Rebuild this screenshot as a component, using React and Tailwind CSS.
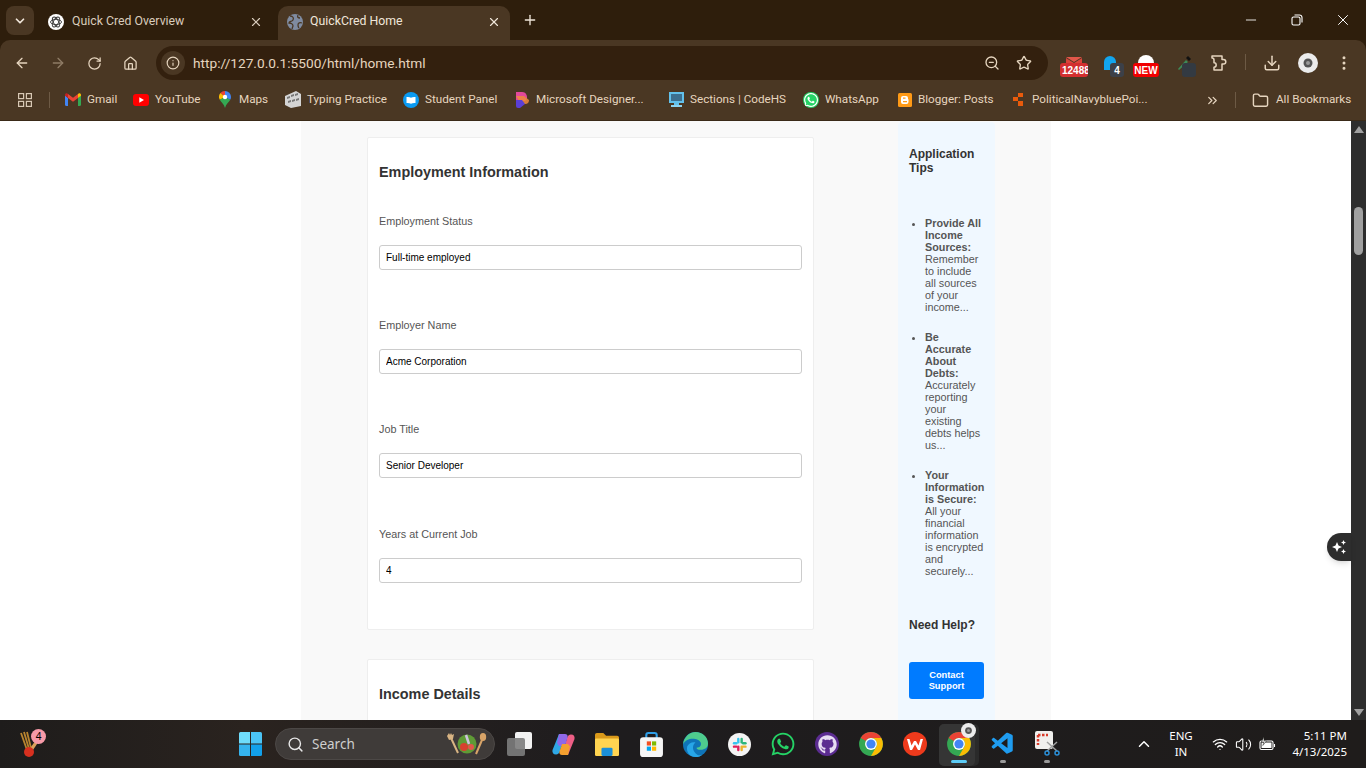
import React from "react";
import { FaWhatsapp, FaGithub } from "react-icons/fa";
import { VscVscode } from "react-icons/vsc";
import {
  ArrowLeft,
  ArrowRight,
  RotateCw,
  Home,
  Info,
  ZoomOut,
  Star,
  Download,
  EllipsisVertical,
  ChevronDown,
  ChevronUp,
  ChevronsRight,
  Folder,
  X,
  Plus,
  Minus,
  Search,
  Wifi,
  Volume2,
} from "lucide-react";

function ChromeLogo({ size = 32 }) {
  return (
    <svg width={size} height={size} viewBox="0 0 48 48">
      <circle cx="24" cy="24" r="22" fill="#34a853" />
      <path d="M24 2A22 22 0 0 1 43 13H24A11 11 0 0 0 14.500 18.500L5 13A22 22 0 0 1 24 2Z" fill="#ea4335" />
      <path d="M43 13A22 22 0 0 1 24 46L33.500 29.500A11 11 0 0 0 24 13Z" fill="#fbbc04" />
      <circle cx="24" cy="24" r="11" fill="#fff" />
      <circle cx="24" cy="24" r="8.500" fill="#4285f4" />
    </svg>
  );
}

function Avatar({ size = 20 }) {
  return (
    <svg width={size} height={size} viewBox="0 0 20 20">
      <circle cx="10" cy="10" r="10" fill="#ececec" />
      <circle cx="10" cy="10" r="4.500" fill="#555" />
      <circle cx="10" cy="10" r="2" fill="#999" />
    </svg>
  );
}

function KnotFavicon() {
  return (
    <svg width="16" height="16" viewBox="0 0 16 16" fill="none" stroke="#3c3c3c" strokeWidth="0.900">
      <circle cx="8" cy="8" r="8" fill="#fff" stroke="none" />
      <ellipse cx="8" cy="8" rx="5.500" ry="2.600" />
      <ellipse cx="8" cy="8" rx="5.500" ry="2.600" transform="rotate(60 8 8)" />
      <ellipse cx="8" cy="8" rx="5.500" ry="2.600" transform="rotate(120 8 8)" />
    </svg>
  );
}

function GmailIcon() {
  return (
    <svg width="16" height="13" viewBox="0 0 16 13">
      <path d="M0 2v9.500A1.500 1.500 0 0 0 1.500 13H3V5z" fill="#4285f4" />
      <path d="M16 2v9.500a1.500 1.500 0 0 1-1.500 1.500H13V5z" fill="#34a853" />
      <path d="M3 5 8 8.800 13 5V1l-5 3.800L3 1z" fill="#ea4335" />
      <path d="M0 2c0-1.600 2-2.300 3-1V5L0 2.800z" fill="#c5221f" />
      <path d="M16 2c0-1.600-2-2.300-3-1V5l3-2.200z" fill="#fbbc04" />
    </svg>
  );
}

function YoutubeIcon() {
  return (
    <svg width="16" height="12" viewBox="0 0 16 12">
      <rect width="16" height="12" rx="3" fill="#ff0000" />
      <path d="M6.300 3.200v5.600L11 6z" fill="#fff" />
    </svg>
  );
}

function MapsIcon() {
  return (
    <svg width="12" height="17" viewBox="0 0 12 17">
      <path d="M6 0a6 6 0 0 1 6 6c0 1-.3 1.900-.8 2.800L6 6z" fill="#4285f4" />
      <path d="M6 0a6 6 0 0 0-4.600 2.100L6 6z" fill="#ea4335" />
      <path d="M1.400 2.100A6 6 0 0 0 .800 8.800L6 6z" fill="#fbbc04" />
      <path d="M.800 8.800C2 11 5 13 6 17c1-4 4-6 5.200-8.200L6 6z" fill="#34a853" />
      <circle cx="6" cy="6" r="2.200" fill="#fff" />
    </svg>
  );
}

function TypingIcon() {
  return (
    <svg width="16" height="17" viewBox="0 0 16 17">
      <path d="M0 5 11 0l5 3v12l-10 2-6-3z" fill="#d4d4d4" />
      <path d="M2 6l3-1v2l-3 1zm4-2 3-1v2L6 6zm4-1 3-1v2l-3 1zM3 10l3-1v2l-3 1zm4-1 3-1v2l-3 1zm4-1 3-1v2l-3 1z" fill="#777" />
    </svg>
  );
}

function StudentIcon() {
  return (
    <svg width="16" height="16" viewBox="0 0 16 16">
      <circle cx="8" cy="8" r="8" fill="#0a9af2" />
      <path d="M3.500 5c1.800-.3 3.300 0 4.500.8v6c-1.200-.8-2.700-1-4.500-.8zM12.500 5c-1.800-.3-3.300 0-4.500.8v6c1.200-.8 2.700-1 4.500-.8z" fill="#fff" />
    </svg>
  );
}

function DesignerIcon() {
  return (
    <svg width="15" height="16" viewBox="0 0 15 16">
      <path d="M1 0h6a5 5 0 0 1 3 9H1z" fill="#e3489b" />
      <path d="M1 4h8l5 4a4 4 0 0 1-4 4H6z" fill="#f08a3c" opacity=".85" />
      <path d="M1 8h6l3 4-5 4H3a2 2 0 0 1-2-2z" fill="#5a3fd6" />
    </svg>
  );
}

function SectionsIcon() {
  return (
    <svg width="15" height="15" viewBox="0 0 15 15">
      <rect width="15" height="11" fill="#62c0ea" />
      <rect x="2" y="2" width="11" height="7" fill="#3c6f8f" />
      <rect x="5" y="11" width="5" height="2" fill="#62c0ea" />
      <rect x="2" y="13" width="11" height="2" fill="#8bd4f2" />
    </svg>
  );
}

function BloggerIcon() {
  return (
    <svg width="14" height="14" viewBox="0 0 14 14">
      <rect width="14" height="14" rx="1.500" fill="#ff9a16" />
      <path d="M5 3h3a2 2 0 0 1 2 2v1l.500.500V9a2 2 0 0 1-2 2H5a2 2 0 0 1-2-2V5a2 2 0 0 1 2-2z" fill="#fff" />
      <path d="M5 5.200h2.500M5 8.600h4" stroke="#ff9a16" strokeWidth="1.200" />
    </svg>
  );
}

function PoiIcon() {
  return (
    <svg width="13" height="13" viewBox="0 0 13 13">
      <path d="M0 4h5V0h5v4H5v4H0zM5 8h5v5H5z" fill="#ea5b0c" />
    </svg>
  );
}

function PuzzleIcon() {
  return (
    <svg width="17" height="16" viewBox="0 0 17 16" fill="none" stroke="#e6d5bf" strokeWidth="1.500" strokeLinejoin="round">
      <path d="M1 1h10v3.500h1.500a2.300 2.300 0 0 1 0 4.600H11V15H3v-2.800a2.200 2.200 0 0 0 0-4.400V5A2 2 0 0 0 1 3z" />
    </svg>
  );
}

function WindowsLogo() {
  return (
    <svg width="23" height="24" viewBox="0 0 23 24">
      <path d="M0 1.500A1.500 1.500 0 0 1 1.500 0H11v11.500H0z" fill="#6fdcfb" />
      <path d="M12 0h9.500A1.500 1.500 0 0 1 23 1.500v10H12z" fill="#4bc4f5" />
      <path d="M0 12.500h11V24H1.500A1.500 1.500 0 0 1 0 22.500z" fill="#35b3ee" />
      <path d="M12 12.500h11v10a1.500 1.500 0 0 1-1.500 1.500H12z" fill="#12a0ea" />
    </svg>
  );
}

function CricketIcon() {
  return (
    <svg width="24" height="28" viewBox="0 0 24 28">
      <path d="M3 3l6 17M6 2l5 17M9 2l4 16" stroke="#b8842f" strokeWidth="1.800" />
      <path d="M21 11l-8 12-3-2 8-11z" fill="#d9a05b" />
      <circle cx="11" cy="22" r="5" fill="#d7301f" />
    </svg>
  );
}

function SaladIcon() {
  return (
    <svg width="42" height="24" viewBox="0 0 42 24">
      <path d="M5 6l7 15" stroke="#d8b483" strokeWidth="2" />
      <path d="M1 4l2-3 1 2 1-2 1 2 2-1-1 5-4 1z" fill="#d8b483" />
      <ellipse cx="37" cy="5" rx="3.200" ry="4" fill="#d8a468" />
      <path d="M36 8l-6 14" stroke="#d8a468" strokeWidth="2" />
      <circle cx="21" cy="12" r="9.500" fill="#5f9a36" />
      <circle cx="18" cy="15" r="4" fill="#d7412f" />
      <circle cx="25" cy="15" r="3" fill="#e2574a" />
      <path d="M20 3l3 9" stroke="#cfc3df" strokeWidth="2.500" />
    </svg>
  );
}

function TaskViewIcon() {
  return (
    <svg width="25" height="24" viewBox="0 0 25 24">
      <rect x="8" y="0" width="17" height="17" rx="2" fill="#f2f2f2" />
      <rect x="0" y="6" width="18" height="18" rx="2" fill="#7c7c7c" fillOpacity=".9" />
    </svg>
  );
}

function CopilotIcon() {
  return (
    <svg width="23" height="23" viewBox="0 0 23 23">
      <path d="M7 1h6L8 18c-.600 2-2 3.500-4 3.500-2.800 0-4-2-3.500-4.500z" fill="#2fa8e6" />
      <path d="M16 22h-6l5-17c.600-2 2-3.500 4-3.500 2.800 0 4 2 3.500 4.500z" fill="#ee5f86" />
      <path d="M7 1h6c2 0 3 1.500 2.500 3.500L13 13H7l-2-3z" fill="#8f68e8" />
      <path d="M16 22h-6c-2 0-3-1.500-2.500-3.500L10 11h6l2 2.500z" fill="#f5a02f" />
    </svg>
  );
}

function FilesIcon() {
  return (
    <svg width="24" height="24" viewBox="0 0 26 26">
      <path d="M0 3a2 2 0 0 1 2-2h7l3 3h12a2 2 0 0 1 2 2v18a2 2 0 0 1-2 2H2a2 2 0 0 1-2-2z" fill="#d9991a" />
      <rect y="7" width="26" height="19" rx="1.500" fill="#ffd451" />
      <rect x="7" y="17" width="12" height="9" rx="1.500" fill="#1a8fd8" />
    </svg>
  );
}

function StoreIcon() {
  return (
    <svg width="23" height="25" viewBox="0 0 22 24">
      <path d="M6 6V3a2 2 0 0 1 2-2h6a2 2 0 0 1 2 2v3" fill="none" stroke="#2f9fe8" strokeWidth="2" />
      <rect y="5" width="22" height="19" rx="3" fill="#f5f5f5" />
      <rect x="6.500" y="9" width="4" height="4" fill="#f25022" />
      <rect x="11.500" y="9" width="4" height="4" fill="#7fba00" />
      <rect x="6.500" y="14" width="4" height="4" fill="#00a4ef" />
      <rect x="11.500" y="14" width="4" height="4" fill="#ffb900" />
    </svg>
  );
}

function EdgeIcon() {
  return (
    <svg width="25" height="25" viewBox="0 0 24 24">
      <circle cx="12" cy="12" r="12" fill="#0f74b8" />
      <path d="M0 12C1 4 7 0 12 0c7 0 12 5 12 11 0 4-3 6-7 6-3 0-4-1-4-2 3 0 5-2 4-5-2-4-13-6-17 2z" fill="#4ecb8d" />
      <path d="M12 24C6 24 3 19 4 14c1-3 5-5 8-4-3 2-4 8 2 12 2 1 4 0 5-.500-2 1.500-4 2.500-7 2.500z" fill="#27a6e8" />
    </svg>
  );
}

function SlackIcon() {
  return (
    <svg width="23" height="23" viewBox="0 0 24 24">
      <circle cx="12" cy="12" r="12" fill="#f4f4f4" />
      <rect x="9.500" y="5" width="2.500" height="6" rx="1.250" fill="#36c5f0" />
      <rect x="5" y="9.500" width="5" height="2.500" rx="1.250" fill="#36c5f0" />
      <rect x="13" y="5" width="2.500" height="6" rx="1.250" fill="#2eb67d" />
      <rect x="14.500" y="9.500" width="5" height="2.500" rx="1.250" fill="#2eb67d" />
      <rect x="13" y="13" width="2.500" height="6" rx="1.250" fill="#ecb22e" />
      <rect x="14.500" y="13" width="5" height="2.500" rx="1.250" fill="#ecb22e" />
      <rect x="9.500" y="13" width="2.500" height="6" rx="1.250" fill="#e01e5a" />
      <rect x="5" y="13" width="5" height="2.500" rx="1.250" fill="#e01e5a" />
    </svg>
  );
}

function WpsIcon() {
  return (
    <svg width="24" height="24" viewBox="0 0 24 24">
      <circle cx="12" cy="12" r="12" fill="#ee3a1c" />
      <path d="M4 7h2.500l2 6.500L11 9h2l2.500 4.500 2-6.500H20l-3 11h-2l-3-5.500L9 18H7z" fill="#fff" />
    </svg>
  );
}

function SnipIcon() {
  return (
    <svg width="26" height="26" viewBox="0 0 26 26">
      <rect x="1" y="0" width="18" height="18" rx="2" fill="#f0efed" />
      <path d="M4 4h10M4 4v10" stroke="#d83b2a" strokeWidth="2.500" strokeDasharray="2.500 1.500" />
      <path d="M13 11l10 9M23 11l-10 9" stroke="#a0a0a0" strokeWidth="1.500" />
      <circle cx="13" cy="22" r="2" fill="none" stroke="#2a8fd8" strokeWidth="1.500" />
      <circle cx="23" cy="22" r="2" fill="none" stroke="#2a8fd8" strokeWidth="1.500" />
    </svg>
  );
}

function BatteryIcon() {
  return (
    <svg width="17" height="14" viewBox="0 0 17 14" fill="none" stroke="#fff" strokeWidth="1.100">
      <rect x="1" y="4" width="13" height="8.500" rx="1.500" />
      <path d="M15.500 7v3" />
      <path d="M2.500 5.500h10v5.500h-10z" fill="#fff" stroke="none" />
      <path d="M5 0 2.500 5h2.500L3.800 8.500 7.500 4H5z" fill="#fff" stroke="#1f1c1b" strokeWidth="0.500" />
    </svg>
  );
}

function Sparkles() {
  return (
    <svg width="16" height="16" viewBox="0 0 16 16" fill="#fff">
      <path d="M6 3l1.500 3.500L11 8 7.500 9.500 6 13 4.500 9.500 1 8l3.500-1.500z" />
      <path d="M12.500 1l.8 1.700L15 3.500l-1.700.8-.8 1.700-.8-1.700L10 3.500l1.700-.8z" />
      <path d="M12.500 10l.8 1.700 1.700.8-1.700.8-.8 1.700-.8-1.700-1.700-.8 1.700-.8z" />
    </svg>
  );
}

const bookmarks = [
  { label: "Gmail", icon: <GmailIcon />, width: "w-[68px] gap-[6px]" },
  { label: "YouTube", icon: <YoutubeIcon />, width: "w-[86px] gap-[6px]" },
  { label: "Maps", icon: <MapsIcon />, width: "w-[66px] gap-[8px]" },
  { label: "Typing Practice", icon: <TypingIcon />, width: "w-[118px] gap-[6px]" },
  { label: "Student Panel", icon: <StudentIcon />, width: "w-[112px] gap-[6px]" },
  { label: "Microsoft Designer...", icon: <DesignerIcon />, width: "w-[154px] gap-[6px]" },
  { label: "Sections | CodeHS", icon: <SectionsIcon />, width: "w-[134px] gap-[6px]" },
  { label: "WhatsApp", icon: <FaWhatsapp size={16} color="#fff" className="rounded-full bg-[#25d366]" />, width: "w-[95px] gap-[6px]" },
  { label: "Blogger: Posts", icon: <BloggerIcon />, width: "w-[115px] gap-[6px]" },
  { label: "PoliticalNavybluePoi...", icon: <PoiIcon />, width: "w-[186px] gap-[6px]" },
];

const fields = [
  { label: "Employment Status", value: "Full-time employed" },
  { label: "Employer Name", value: "Acme Corporation" },
  { label: "Job Title", value: "Senior Developer" },
  { label: "Years at Current Job", value: "4" },
];

const tips = [
  {
    title: "Provide All Income Sources:",
    text: "Remember to include all sources of your income...",
  },
  {
    title: "Be Accurate About Debts:",
    text: "Accurately reporting your existing debts helps us...",
  },
  {
    title: "Your Information is Secure:",
    text: "All your financial information is encrypted and securely...",
  },
];

function ExtBadge({ children, className }) {
  return (
    <span
      className={
        "absolute bottom-0 h-[14px] rounded-[3px] overflow-hidden flex items-center font-['Liberation_Sans',sans-serif] font-bold text-[10px] text-white " +
        className
      }
    >
      {children}
    </span>
  );
}

function Toolbar() {
  return (
    <div className="flex items-end h-[40px] bg-[#4a3723] rounded-t-[10px] text-[#e6d5bf]">
      <div className="flex items-center h-[34px] pl-[14px]">
        <ArrowLeft size={16} strokeWidth={2} />
        <ArrowRight size={16} strokeWidth={2} className="ml-[20px] text-[#8f7c66]" />
        <RotateCw size={15} strokeWidth={2} className="ml-[21px]" />
        <Home size={15} strokeWidth={2} className="ml-[21px]" />
      </div>
      <div className="ml-[18px] flex items-center w-[892px] h-[34px] rounded-full bg-[#33200e]">
        <div className="ml-[5px] flex items-center justify-center w-[24px] h-[24px] rounded-full bg-[#4a3723]">
          <Info size={14} />
        </div>
        <span className="ml-[8px] flex-1 text-[13.700px]">http://127.0.0.1:5500/html/home.html</span>
        <ZoomOut size={16} />
        <Star size={16} className="ml-[16px] mr-[16px]" />
      </div>
      <div className="flex items-center h-[40px] relative flex-1">
        <div className="absolute left-[12px] top-[14px] w-[28px] h-[23px]">
          <svg width="16" height="6" viewBox="0 0 16 6" className="ml-[6px] mt-[3px]">
            <path d="M0 0h16L8 5z" fill="#e2574a" />
            <path d="M0 1l8 5 8-5v5H0z" fill="#d9453b" />
          </svg>
          <ExtBadge className="left-0 w-[28px] pl-[2px] bg-[#d32f2f]">12488</ExtBadge>
        </div>
        <div className="absolute left-[56px] top-[14px] w-[20px] h-[23px]">
          <svg width="12" height="14" viewBox="0 0 12 14" className="mt-[2px]">
            <path d="M0 6a6 6 0 0 1 12 0v8H0z" fill="#12a5ee" />
          </svg>
          <ExtBadge className="left-[6px] w-[14px] justify-center bg-[#3c4048]">4</ExtBadge>
        </div>
        <div className="absolute left-[85px] top-[14px] w-[26px] h-[23px]">
          <svg width="16" height="8" viewBox="0 0 16 8" className="ml-[5px] mt-[1px]">
            <path d="M0 8a8 8 0 0 1 16 0z" fill="#fff" />
          </svg>
          <ExtBadge className="left-0 w-[26px] justify-center bg-[#f00000]">NEW</ExtBadge>
        </div>
        <div className="absolute left-[129px] top-[14px] w-[20px] h-[23px]">
          <svg width="14" height="14" viewBox="0 0 14 14" className="mt-[2px]">
            <path d="M1 13l8-9 2 2-9 8z" fill="#3e8a58" />
            <path d="M9 2l2-2 3 3-2 2z" fill="#111" />
          </svg>
          <ExtBadge className="left-[5px] w-[14px] bg-[#333a42]">{""}</ExtBadge>
        </div>
        <div className="absolute left-[163px] top-[15px]">
          <PuzzleIcon />
        </div>
        <div className="absolute left-[197px] top-[14px] w-px h-[16px] bg-[#6d5a45]" />
        <Download size={18} className="absolute left-[215px] top-[14px]" />
        <div className="absolute left-[250px] top-[13px]">
          <Avatar />
        </div>
        <EllipsisVertical size={18} className="absolute left-[287px] top-[14px]" />
      </div>
    </div>
  );
}

function BookmarksBar() {
  return (
    <div className="flex items-center h-[40px] pl-[18px] bg-[#4a3723] text-[#e6d5bf] text-[11.700px]">
      <svg width="14" height="14" viewBox="0 0 14 14" fill="none" stroke="#d8c8b4" strokeWidth="1.200">
        <rect x="0.600" y="0.600" width="5" height="5" />
        <rect x="8.400" y="0.600" width="5" height="5" />
        <rect x="0.600" y="8.400" width="5" height="5" />
        <rect x="8.400" y="8.400" width="5" height="5" />
      </svg>
      <div className="ml-[17px] mr-[15px] w-px h-[16px] bg-[#6d5a45]" />
      {bookmarks.map((b) => (
        <div key={b.label} className={"flex items-center " + b.width}>
          {b.icon}
          <span>{b.label}</span>
        </div>
      ))}
      <ChevronsRight size={15} className="ml-[6px]" />
      <div className="ml-[15px] w-px h-[16px] bg-[#6d5a45]" />
      <Folder size={17} className="ml-[16px]" />
      <span className="ml-[7px]">All Bookmarks</span>
    </div>
  );
}

function Chrome() {
  return (
    <header className="shrink-0 h-[121px] bg-[#2e1e0c] font-['Roboto',sans-serif] border-b border-[#3a2a18]">
      <div className="flex items-start h-[40px]">
        <div className="ml-[6px] mt-[6px] flex items-center justify-center w-[28px] h-[29px] rounded-[8px] bg-[#4a3723] text-[#f0e6da]">
          <ChevronDown size={14} strokeWidth={3} />
        </div>
        <div className="ml-[12px] flex items-center w-[232px] h-[34px] mt-[6px] pl-[2px] pr-[15px] pb-[3px] text-[#d9ccbc]">
          <KnotFavicon />
          <span className="ml-[8px] flex-1 text-[12.300px]">Quick Cred Overview</span>
          <X size={14} strokeWidth={2} />
        </div>
        <div className="flex items-center w-[232px] h-[34px] mt-[6px] pl-[9px] pr-[9px] pb-[3px] rounded-t-[10px] bg-[#4a3723] text-[#f0e6da]">
          <svg width="16" height="16" viewBox="0 0 16 16">
            <circle cx="8" cy="8" r="8" fill="#7f8ba0" />
            <path d="M3 2c3 0 4 2 3 4S2 7 2 9c2 0 4 1 4 3l-1 3M11 1c-1 2 0 3 2 3M15 9c-2-1-4 0-4 2s1 3 1 3" stroke="#4a3723" strokeWidth="1.300" fill="none" />
          </svg>
          <span className="ml-[7px] flex-1 text-[12.300px]">QuickCred Home</span>
          <X size={14} strokeWidth={2} />
        </div>
        <Plus size={16} strokeWidth={2} className="ml-[12px] mt-[12px] text-[#f0e6da]" />
        <div className="ml-auto flex items-center mt-[11px] text-white">
          <Minus size={16} strokeWidth={1.300} />
          <svg width="12" height="12" viewBox="0 0 12 12" fill="none" stroke="#fff" strokeWidth="1.100" className="ml-[32px]">
            <rect x="1" y="3" width="8" height="8" rx="1.500" />
            <path d="M3.500 1h5A2.500 2.500 0 0 1 11 3.500v5" />
          </svg>
          <X size={18} strokeWidth={1.300} className="ml-[31px] mr-[14px]" />
        </div>
      </div>
      <Toolbar />
      <BookmarksBar />
    </header>
  );
}

function EmploymentCard() {
  return (
    <section className="bg-white border border-[#eeeeee] rounded-[2px] px-[11px] pt-[26px] pb-[46.500px]">
      <h2 className="text-[14.400px] leading-[16px] font-bold text-[#333333]">Employment Information</h2>
      <div className="mt-[34px]">
        {fields.map((f, i) => (
          <div key={f.label} className={i < 3 ? "mb-[48.200px]" : ""}>
            <label className="block text-[10.800px] leading-[14px] text-[#555555]">{f.label}</label>
            <input
              readOnly
              value={f.value}
              className="block mt-[17px] w-[423px] h-[25px] px-[6px] text-[10px] text-black bg-white border border-[#cccccc] rounded-[3px] outline-none"
            />
          </div>
        ))}
      </div>
    </section>
  );
}

function IncomeCard() {
  return (
    <section className="mt-[29px] h-[300px] bg-white border border-[#eeeeee] rounded-[2px] px-[11px] pt-[26px]">
      <h2 className="text-[14.400px] leading-[16px] font-bold text-[#333333]">Income Details</h2>
    </section>
  );
}

function Sidebar() {
  return (
    <aside className="w-[97px] h-[640px] mt-[1px] px-[11px] pt-[25px] bg-[#f0f8ff] rounded-[4px]">
      <h3 className="text-[12px] leading-[14px] font-bold text-[#333333]">Application Tips</h3>
      <ul className="mt-[42px] pl-[16px] list-disc text-[10.800px] leading-[12px] text-[#555555]">
        {tips.map((t) => (
          <li key={t.title} className="mb-[18px]">
            <strong className="font-bold">{t.title}</strong> {t.text}
          </li>
        ))}
      </ul>
      <h3 className="mt-[41px] text-[12px] leading-[14px] font-bold text-[#333333]">Need Help?</h3>
      <button className="mt-[30px] w-[75px] h-[37px] px-[8px] bg-[#007bff] rounded-[3px] text-white text-[9.300px] leading-[11px] font-bold">
        Contact Support
      </button>
    </aside>
  );
}

function Page() {
  return (
    <main className="relative flex flex-1 min-h-0 overflow-hidden bg-white font-['Liberation_Sans',Arial,sans-serif]">
      <div className="flex-1 min-w-0">
        <div className="flex mx-auto w-[750px] h-full pl-[66.500px] bg-[#f9f9f9]">
          <div className="w-[447px] pt-[16px]">
            <EmploymentCard />
            <IncomeCard />
          </div>
          <div className="ml-[84px]">
            <Sidebar />
          </div>
        </div>
      </div>
      <div className="flex flex-col items-center shrink-0 w-[15px] bg-[#2d2d2d]">
        <div className="mt-[5px] w-0 h-0 border-x-[5px] border-x-transparent border-b-[7px] border-b-[#a0a0a0]" />
        <div className="mt-[74px] w-[9px] h-[48px] rounded-full bg-[#a0a0a0]" />
        <div className="mt-auto mb-[4px] w-0 h-0 border-x-[5px] border-x-transparent border-t-[7px] border-t-[#a0a0a0]" />
      </div>
      <div className="absolute right-[15px] top-[412px] flex items-center justify-center w-[24px] h-[28px] rounded-l-full bg-[#2d2d2d] shadow-md">
        <Sparkles />
      </div>
    </main>
  );
}

function TaskIcon({ children, active, running }) {
  return (
    <div className="relative flex items-center justify-center w-[44px] h-[44px]">
      {active && <span className="absolute left-[2px] top-[2px] w-[40px] h-[42px] rounded-[5px] bg-[#2a2a2a]" />}
      {active && <span className="absolute left-[2px] top-[2px] w-[36px] h-[42px] rounded-[5px] bg-[#353535]" />}
      <span className="relative flex">{children}</span>
      {active && <span className="absolute bottom-[3px] left-[14px] w-[16px] h-[3px] rounded-full bg-[#5ccbf5]" />}
      {running && <span className="absolute bottom-[3px] left-[19px] w-[6px] h-[3px] rounded-full bg-[#9a9a9a]" />}
    </div>
  );
}

function Taskbar() {
  return (
    <footer className="relative shrink-0 flex items-center h-[48px] bg-[linear-gradient(90deg,#1e1c1b,#2a231f_18%,#1e1c1e_45%,#1f1c1b)] text-white font-['Noto_Sans',sans-serif]">
      <div className="relative ml-[18px] w-[24px] h-[28px]">
        <CricketIcon />
        <span className="absolute -top-[1px] left-[13px] flex items-center justify-center w-[15px] h-[15px] rounded-full bg-[#f79aa8] text-black text-[10px]">
          4
        </span>
      </div>
      <div className="ml-[197px]">
        <WindowsLogo />
      </div>
      <div className="ml-[13px] flex items-center w-[220px] h-[32px] pl-[11px] pr-[6px] rounded-full bg-[#3f3b39] border border-[#4c4846]">
        <Search size={17} className="text-[#e8e8e8]" />
        <span className="ml-[8px] flex-1 text-[13.500px] text-[#cfcfcf]">Search</span>
        <SaladIcon />
      </div>
      <div className="ml-[2px] flex items-center">
        <TaskIcon><TaskViewIcon /></TaskIcon>
        <TaskIcon><CopilotIcon /></TaskIcon>
        <TaskIcon><FilesIcon /></TaskIcon>
        <TaskIcon><StoreIcon /></TaskIcon>
        <TaskIcon><EdgeIcon /></TaskIcon>
        <TaskIcon><SlackIcon /></TaskIcon>
        <TaskIcon><FaWhatsapp size={26} color="#25d366" /></TaskIcon>
        <TaskIcon>
          <span className="flex items-center justify-center w-[24px] h-[24px] rounded-full bg-[#5b2c91]">
            <FaGithub size={19} color="#e6dcf2" />
          </span>
        </TaskIcon>
        <TaskIcon><ChromeLogo size={26} /></TaskIcon>
        <TaskIcon><WpsIcon /></TaskIcon>
        <TaskIcon active>
          <ChromeLogo size={26} />
          <span className="absolute -top-[8px] -right-[4px]">
            <Avatar size={15} />
          </span>
        </TaskIcon>
        <TaskIcon running><VscVscode size={26} color="#1f9cf0" /></TaskIcon>
        <TaskIcon running><SnipIcon /></TaskIcon>
      </div>
      <ChevronUp size={18} className="ml-[66px]" />
      <div className="ml-[13px] w-[30px] text-center text-[11.500px] leading-[16px]">
        ENG
        <br />
        IN
      </div>
      <Wifi size={16} className="ml-[16px]" />
      <Volume2 size={17} strokeWidth={1.500} className="ml-[7px]" />
      <span className="ml-[7px] flex">
        <BatteryIcon />
      </span>
      <div className="ml-auto mr-[19px] text-right text-[11.500px] leading-[16px]">
        5:11 PM
        <br />
        4/13/2025
      </div>
    </footer>
  );
}

export default function App() {
  return (
    <div className="flex flex-col w-full h-screen overflow-hidden">
      <Chrome />
      <Page />
      <Taskbar />
    </div>
  );
}
